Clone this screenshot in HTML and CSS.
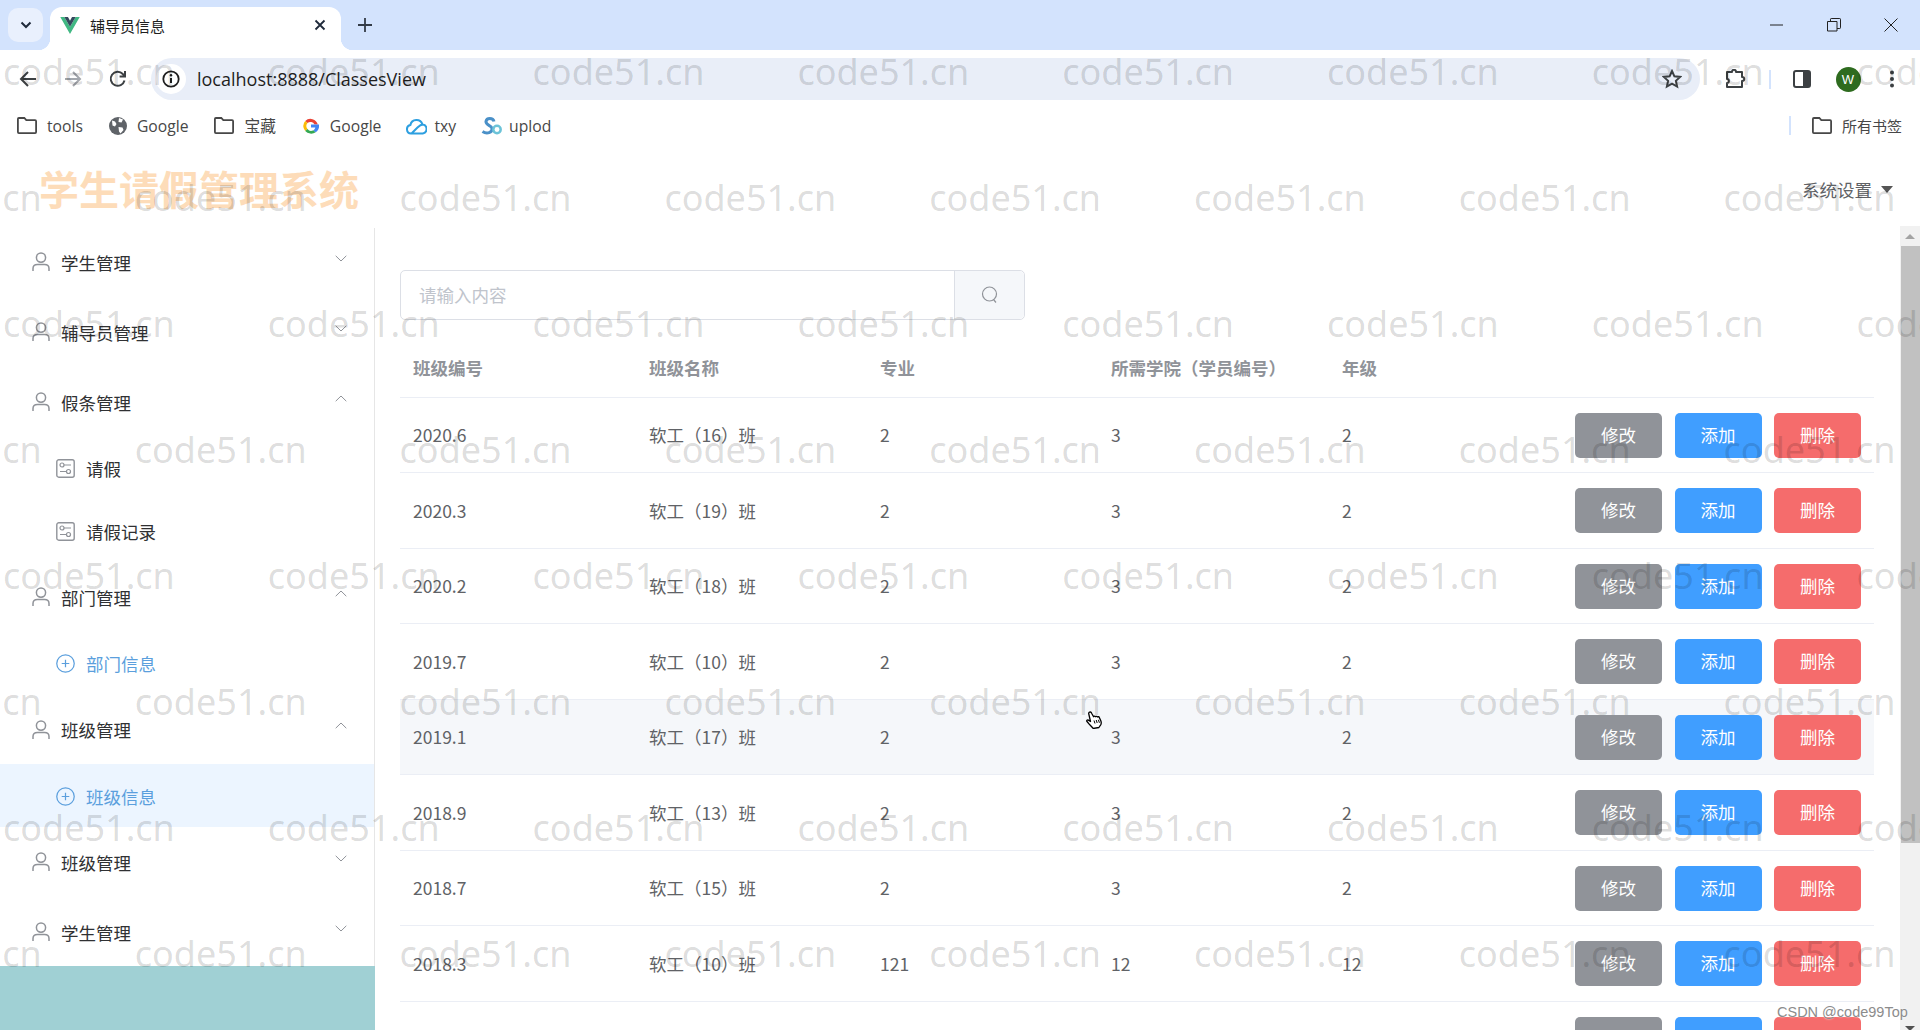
FILE: index.html
```html
<!DOCTYPE html>
<html lang="zh-CN">

<head>
    <meta charset="UTF-8">
    <meta name="viewport" content="width=device-width, initial-scale=1.0">
    <title>辅导员信息</title>
    <link rel="stylesheet" href="styles.css">
</head>

<body>
    <svg class="iconDefs" aria-hidden="true">
        <symbol id="i-user" viewBox="0 0 18 20">
            <circle cx="9" cy="5.6" r="4.6" fill="none" stroke="currentColor" stroke-width="1.5" />
            <path d="M1 19v-2.6c0-2.6 2-4 4.4-4h7.2c2.4 0 4.4 1.4 4.4 4V19" fill="none" stroke="currentColor" stroke-width="1.5" />
        </symbol>
        <symbol id="i-down" viewBox="0 0 12 7">
            <path d="M.7.8 6 6 11.3.8" fill="none" stroke="currentColor" stroke-width="1" />
        </symbol>
        <symbol id="i-up" viewBox="0 0 12 7">
            <path d="M.7 6.2 6 1l5.3 5.2" fill="none" stroke="currentColor" stroke-width="1" />
        </symbol>
        <symbol id="i-option" viewBox="0 0 19 19">
            <rect x=".8" y=".8" width="17.4" height="17.4" rx="2" fill="none" stroke="currentColor" stroke-width="1.4" />
            <circle cx="6" cy="6" r="2" fill="none" stroke="currentColor" stroke-width="1.2" />
            <circle cx="12.5" cy="12.5" r="2" fill="none" stroke="currentColor" stroke-width="1.2" />
            <path d="M8 6h7M4 12.5h6.5" fill="none" stroke="currentColor" stroke-width="1.2" />
        </symbol>
        <symbol id="i-plus" viewBox="0 0 20 20">
            <circle cx="10" cy="10" r="9.2" fill="none" stroke="currentColor" stroke-width="1.3" />
            <path d="M10 6v8M6 10h8" fill="none" stroke="currentColor" stroke-width="1.3" />
        </symbol>
        <symbol id="i-folder" viewBox="0 0 20 17">
            <path d="M1.9 1h5.4l2 2.2h8.8c.6 0 1 .4 1 1v10.9c0 .6-.4 1-1 1H1.9c-.6 0-1-.4-1-1V2c0-.6.4-1 1-1z" fill="none" stroke="currentColor" stroke-width="1.8" />
        </symbol>
    </svg>

    <div class="browserTabs">
        <div class="tabSearch">
            <svg class="glyph12" viewBox="0 0 12 8"><path d="M1.5 1.5 6 6l4.500-4.500" fill="none" stroke="#1f2a3a" stroke-width="2" /></svg>
        </div>
        <div class="tab">
            <svg class="vueLogo" viewBox="0 0 24 21">
                <path d="M0 0h5l7 12 7-12h5L12 21z" fill="#41b883" />
                <path d="M5 0h4.500L12 4.500 14.500 0H19l-7 12z" fill="#35495e" />
            </svg>
            <span class="tabTitle">辅导员信息</span>
            <svg class="tabClose" viewBox="0 0 12 12"><path d="M1.5 1.5l9 9M10.5 1.5l-9 9" fill="none" stroke="#1f2a3a" stroke-width="1.8" /></svg>
        </div>
        <div class="newTab">
            <svg class="glyph14" viewBox="0 0 14 14"><path d="M7 0v14M0 7h14" fill="none" stroke="#333b47" stroke-width="1.8" /></svg>
        </div>
        <div class="windowControls">
            <div class="windowBtn"><svg class="glyph14" viewBox="0 0 14 14"><path d="M0 7h13" fill="none" stroke="#222" stroke-width="1" /></svg></div>
            <div class="windowBtn"><svg class="glyph14" viewBox="0 0 14 14"><path d="M.5 3.5H10V13H.5zM3.500 3.500V1.200c0-.4.3-.7.7-.7h8.600c.4 0 .7.300.7.700v8.600c0 .4-.3.700-.7.700H10" fill="none" stroke="#222" stroke-width="1" /></svg></div>
            <div class="windowBtn"><svg class="glyph14" viewBox="0 0 14 14"><path d="M.5.5l13 13M13.5.5l-13 13" fill="none" stroke="#222" stroke-width="1" /></svg></div>
        </div>
    </div>

    <div class="toolbar">
        <div class="navBtn"><svg class="glyph18" viewBox="0 0 18 18"><path d="M17 9H2M9 2 2 9l7 7" fill="none" stroke="#3c4043" stroke-width="2" /></svg></div>
        <div class="navBtn"><svg class="glyph18" viewBox="0 0 18 18"><path d="M1 9h15M9 2l7 7-7 7" fill="none" stroke="#a3a7ad" stroke-width="2" /></svg></div>
        <div class="navBtn"><svg class="glyph18" viewBox="0 0 18 18"><path d="M15.5 10.5A7 7 0 1 1 13.8 4L16 6.200M16 1v5.400h-5.400" fill="none" stroke="#3c4043" stroke-width="2" /></svg></div>
        <div class="omnibox">
            <div class="siteInfo">
                <svg class="glyph18" viewBox="0 0 18 18">
                    <circle cx="9" cy="9" r="7.7" fill="none" stroke="#1f1f1f" stroke-width="1.8" />
                    <path d="M9 8v5" stroke="#1f1f1f" stroke-width="2" />
                    <circle cx="9" cy="5.3" r="1.2" fill="#1f1f1f" />
                </svg>
            </div>
            <span class="urlText">localhost:8888/ClassesView</span>
            <svg class="starIcon" viewBox="0 0 20 20"><path d="M10 2l2.4 5.300 5.800.6-4.300 3.900 1.200 5.700-5.100-2.900-5.100 2.900 1.200-5.700L1.800 7.900l5.800-.6z" fill="none" stroke="#3c4043" stroke-width="2" /></svg>
        </div>
        <div class="extBtn"><svg class="extIcon" viewBox="0 0 22 20"><path d="M2 3h5c0-3 4-3 4 0h6v5c3 0 3 4 0 4v6H2v-4c2.500 0 2.500-4 0-4z" fill="none" stroke="#3c4043" stroke-width="2" stroke-linejoin="round" /></svg></div>
        <div class="toolSep"></div>
        <div class="panelBtn"><svg class="panelIcon" viewBox="0 0 18 18"><rect x="1" y="1" width="16" height="16" rx="2" fill="#fff" stroke="#3c4043" stroke-width="2" /><rect x="10" y="1" width="7" height="16" fill="#3c4043" /></svg></div>
        <div class="avatarBtn"><span class="avatar">W</span></div>
        <div class="kebabBtn"><svg class="kebabIcon" viewBox="0 0 6 18"><circle cx="3" cy="2.5" r="2" fill="#3c4043" /><circle cx="3" cy="9" r="2" fill="#3c4043" /><circle cx="3" cy="15.5" r="2" fill="#3c4043" /></svg></div>
    </div>

    <div class="bookmarks">
        <div class="bookmark"><svg class="folderIcon"><use href="#i-folder" /></svg><span>tools</span></div>
        <div class="bookmark">
            <svg class="bmIcon" viewBox="0 0 18 18">
                <circle cx="9" cy="9" r="9" fill="#5f6368" />
                <path d="M3 3.500l3 1 1.500 2.500L6 9.500l-2.500-1zM10 1l4 1.500-1.500 3-3-.5zM9.500 10l4 .5 1 2.500-3 3.500-1.500-2z" fill="#fff" />
            </svg>
            <span>Google</span>
        </div>
        <div class="bookmark"><svg class="folderIcon"><use href="#i-folder" /></svg><span>宝藏</span></div>
        <div class="bookmark">
            <svg class="bmIcon" viewBox="0 0 18 18">
                <path d="M15.800 7.500A7.500 7.500 0 0 0 3.200 4.100l2.300 2a4.500 4.500 0 0 1 7 1.400z" fill="#ea4335" />
                <path d="M3.200 4.100A7.800 7.800 0 0 0 3.200 13.900l2.300-2a4.500 4.500 0 0 1 0-5.800z" fill="#fbbc05" />
                <path d="M3.200 13.900a7.800 7.800 0 0 0 10.500 1.300l-2.300-2a4.500 4.500 0 0 1-5.900-1.300z" fill="#34a853" />
                <path d="M9 7.500h8c.5 4-1 6.300-3.300 7.700l-2.300-2c1-.6 1.600-1.400 1.900-2.700H9z" fill="#4285f4" />
            </svg>
            <span>Google</span>
        </div>
        <div class="bookmark">
            <svg class="bmIcon cloudIcon" viewBox="0 0 21 18">
                <path d="M5 16.500a4.300 4.300 0 0 1-.6-8.500 6.200 6.200 0 0 1 12-.6 4.600 4.600 0 0 1 .4 9.100zM5.500 16.500l6-6c2-2 3.800-3 5.500-3" fill="none" stroke="#2d9fe0" stroke-width="2" />
            </svg>
            <span>txy</span>
        </div>
        <div class="bookmark">
            <svg class="bmIcon cloudIcon" viewBox="0 0 21 18">
                <path d="M13 4.500C12 .5 5.500.5 5 4.500 4.500 8.500 10.500 8 11 11.500 11.500 15.500 6 17.500 1.500 14.500" fill="none" stroke="#4a90c8" stroke-width="3" />
                <circle cx="16" cy="12.500" r="3.700" fill="none" stroke="#6cc3d8" stroke-width="2.500" />
            </svg>
            <span>uplod</span>
        </div>
        <div class="bookmarkSep"></div>
        <div class="bookmark allMarks"><svg class="folderIcon"><use href="#i-folder" /></svg><span>所有书签</span></div>
    </div>

    <div class="appHeader">
        <div class="logo">学生请假管理系统</div>
        <div class="settings">系统设置<i class="caret"></i></div>
    </div>

    <div class="appBody">
        <aside class="sidebar">
            <nav class="menu">
                <div class="menuItem"><svg class="userIcon"><use href="#i-user" /></svg>学生管理<svg class="arrowIcon"><use href="#i-down" /></svg></div>
                <div class="menuItem"><svg class="userIcon"><use href="#i-user" /></svg>辅导员管理<svg class="arrowIcon"><use href="#i-down" /></svg></div>
                <div class="menuItem"><svg class="userIcon"><use href="#i-user" /></svg>假条管理<svg class="arrowIcon"><use href="#i-up" /></svg></div>
                <div class="subItem"><svg class="subIcon"><use href="#i-option" /></svg>请假</div>
                <div class="subItem"><svg class="subIcon"><use href="#i-option" /></svg>请假记录</div>
                <div class="menuItem"><svg class="userIcon"><use href="#i-user" /></svg>部门管理<svg class="arrowIcon"><use href="#i-up" /></svg></div>
                <div class="subItem blue"><svg class="subIcon"><use href="#i-plus" /></svg>部门信息</div>
                <div class="menuItem"><svg class="userIcon"><use href="#i-user" /></svg>班级管理<svg class="arrowIcon"><use href="#i-up" /></svg></div>
                <div class="subItem blue active"><svg class="subIcon"><use href="#i-plus" /></svg>班级信息</div>
                <div class="menuItem"><svg class="userIcon"><use href="#i-user" /></svg>班级管理<svg class="arrowIcon"><use href="#i-down" /></svg></div>
                <div class="menuItem"><svg class="userIcon"><use href="#i-user" /></svg>学生管理<svg class="arrowIcon"><use href="#i-down" /></svg></div>
            </nav>
            <div class="sidebarFoot"></div>
        </aside>

        <main class="content">
            <div class="searchBox">
                <div class="searchInput">请输入内容</div>
                <div class="searchBtn">
                    <svg class="searchIcon" viewBox="0 0 18 18">
                        <circle cx="8.5" cy="8" r="7" fill="none" stroke="#909399" stroke-width="1.2" />
                        <path d="M12.5 13.5l2.5 3" fill="none" stroke="#909399" stroke-width="1.2" />
                    </svg>
                </div>
            </div>

            <table class="dataTable">
                <colgroup>
                    <col class="col1">
                    <col class="col2">
                    <col class="col2">
                    <col class="col2">
                    <col class="col2">
                    <col>
                </colgroup>
                <thead>
                    <tr>
                        <th>班级编号</th>
                        <th>班级名称</th>
                        <th>专业</th>
                        <th>所需学院（学员编号）</th>
                        <th>年级</th>
                        <th></th>
                    </tr>
                </thead>
                <tbody>
                    <tr>
                        <td>2020.6</td><td>软工（16）班</td><td>2</td><td>3</td><td>2</td>
                        <td class="actions"><button class="btn gray">修改</button><button class="btn blueBtn">添加</button><button class="btn red">删除</button></td>
                    </tr>
                    <tr>
                        <td>2020.3</td><td>软工（19）班</td><td>2</td><td>3</td><td>2</td>
                        <td class="actions"><button class="btn gray">修改</button><button class="btn blueBtn">添加</button><button class="btn red">删除</button></td>
                    </tr>
                    <tr>
                        <td>2020.2</td><td>软工（18）班</td><td>2</td><td>3</td><td>2</td>
                        <td class="actions"><button class="btn gray">修改</button><button class="btn blueBtn">添加</button><button class="btn red">删除</button></td>
                    </tr>
                    <tr>
                        <td>2019.7</td><td>软工（10）班</td><td>2</td><td>3</td><td>2</td>
                        <td class="actions"><button class="btn gray">修改</button><button class="btn blueBtn">添加</button><button class="btn red">删除</button></td>
                    </tr>
                    <tr class="hoverRow">
                        <td>2019.1</td><td>软工（17）班</td><td>2</td><td>3</td><td>2</td>
                        <td class="actions"><button class="btn gray">修改</button><button class="btn blueBtn">添加</button><button class="btn red">删除</button></td>
                    </tr>
                    <tr>
                        <td>2018.9</td><td>软工（13）班</td><td>2</td><td>3</td><td>2</td>
                        <td class="actions"><button class="btn gray">修改</button><button class="btn blueBtn">添加</button><button class="btn red">删除</button></td>
                    </tr>
                    <tr>
                        <td>2018.7</td><td>软工（15）班</td><td>2</td><td>3</td><td>2</td>
                        <td class="actions"><button class="btn gray">修改</button><button class="btn blueBtn">添加</button><button class="btn red">删除</button></td>
                    </tr>
                    <tr>
                        <td>2018.3</td><td>软工（10）班</td><td>121</td><td>12</td><td>12</td>
                        <td class="actions"><button class="btn gray">修改</button><button class="btn blueBtn">添加</button><button class="btn red">删除</button></td>
                    </tr>
                    <tr>
                        <td></td><td></td><td></td><td></td><td></td>
                        <td class="actions"><button class="btn gray">修改</button><button class="btn blueBtn">添加</button><button class="btn red">删除</button></td>
                    </tr>
                </tbody>
            </table>
        </main>

        <div class="scrollbar">
            <div class="scrollArrow"><i class="arrowUp"></i></div>
            <div class="scrollThumb"></div>
            <div class="scrollArrow scrollArrowEnd"><i class="arrowDown"></i></div>
        </div>
    </div>

    <!-- 水印 -->
    <div class="watermark">
        <div class="wmRow"><span>code51.cn</span><span>code51.cn</span><span>code51.cn</span><span>code51.cn</span><span>code51.cn</span><span>code51.cn</span><span>code51.cn</span><span>code51.cn</span></div>
        <div class="wmRow wmShift"><span>code51.cn</span><span>code51.cn</span><span>code51.cn</span><span>code51.cn</span><span>code51.cn</span><span>code51.cn</span><span>code51.cn</span><span>code51.cn</span></div>
        <div class="wmRow"><span>code51.cn</span><span>code51.cn</span><span>code51.cn</span><span>code51.cn</span><span>code51.cn</span><span>code51.cn</span><span>code51.cn</span><span>code51.cn</span></div>
        <div class="wmRow wmShift"><span>code51.cn</span><span>code51.cn</span><span>code51.cn</span><span>code51.cn</span><span>code51.cn</span><span>code51.cn</span><span>code51.cn</span><span>code51.cn</span></div>
        <div class="wmRow"><span>code51.cn</span><span>code51.cn</span><span>code51.cn</span><span>code51.cn</span><span>code51.cn</span><span>code51.cn</span><span>code51.cn</span><span>code51.cn</span></div>
        <div class="wmRow wmShift"><span>code51.cn</span><span>code51.cn</span><span>code51.cn</span><span>code51.cn</span><span>code51.cn</span><span>code51.cn</span><span>code51.cn</span><span>code51.cn</span></div>
        <div class="wmRow"><span>code51.cn</span><span>code51.cn</span><span>code51.cn</span><span>code51.cn</span><span>code51.cn</span><span>code51.cn</span><span>code51.cn</span><span>code51.cn</span></div>
        <div class="wmRow wmShift"><span>code51.cn</span><span>code51.cn</span><span>code51.cn</span><span>code51.cn</span><span>code51.cn</span><span>code51.cn</span><span>code51.cn</span><span>code51.cn</span></div>
    </div>

    <svg class="handCursor" viewBox="0 0 18 18">
        <path d="M3.5 1.2c1-.5 1.700.1 2.100 1l2 3.600c.3-.9 1.500-.9 2 0 .4-.7 1.500-.6 1.900.2.500-.5 1.400-.3 1.800.4l1.500 3.400c.8 2 .3 4-.9 5.200l-1 1.500-5.600 1-3.500-3.700L1 10.500c-.7-.8.300-2 1.300-1.400l2.200 1.400L2.800 3c-.3-.7 0-1.500.7-1.800z" fill="#fff" stroke="#000" stroke-width="1.3" stroke-linejoin="round" />
        <path d="M8 9.5l1 3M10.200 9l1 3M12.400 8.800l1 3" fill="none" stroke="#000" stroke-width="1" />
    </svg>

    <div class="csdnMark">CSDN @code99Top</div>
</body>

</html>
```

FILE: styles.css
```css
* {
    box-sizing: border-box;
}

html,
body {
    height: 100%;
}

body {
    position: relative;
    display: flex;
    flex-direction: column;
    height: 1030px;
    margin: 0;
    overflow: hidden;
    font-family: "Noto Sans CJK SC", "Liberation Sans", sans-serif;
    background-color: #fff;
    color: #303133;
}

svg {
    display: block;
    flex: none;
}

.iconDefs {
    position: absolute;
    width: 0;
    height: 0;
}

.glyph12 {
    width: 12px;
    height: 8px;
}

.glyph14 {
    width: 14px;
    height: 14px;
}

.glyph18 {
    width: 18px;
    height: 18px;
}

/* Barra de abas */
.browserTabs {
    display: flex;
    align-items: flex-end;
    flex: none;
    height: 50px;
    padding-left: 8px;
    padding-right: 1px;
    background-color: #d3e3fd;
}

.tabSearch {
    display: flex;
    align-items: center;
    justify-content: center;
    width: 35px;
    height: 34px;
    margin-bottom: 8px;
    border-radius: 10px;
    background-color: #e9f0fd;
}

.tab {
    position: relative;
    display: flex;
    align-items: center;
    width: 291px;
    height: 43px;
    margin-left: 7px;
    padding: 0 15px 7px 10px;
    border-radius: 12px 12px 0 0;
    background-color: #fff;
}

.tab::before,
.tab::after {
    content: "";
    position: absolute;
    bottom: 0;
    width: 12px;
    height: 12px;
}

.tab::before {
    left: -12px;
    background: radial-gradient(circle at 0 0, transparent 12px, #fff 12.5px);
}

.tab::after {
    right: -12px;
    background: radial-gradient(circle at 100% 0, transparent 12px, #fff 12.5px);
}

.vueLogo {
    width: 20px;
    height: 17px;
}

.tabTitle {
    margin-left: 10px;
    font-size: 15px;
    color: #1f1f1f;
}

.tabClose {
    width: 12px;
    height: 12px;
    margin-left: auto;
}

.newTab {
    display: flex;
    align-items: center;
    justify-content: center;
    width: 48px;
    height: 50px;
}

.windowControls {
    display: flex;
    margin-left: auto;
}

.windowBtn {
    display: flex;
    align-items: center;
    justify-content: center;
    width: 57px;
    height: 50px;
}

/* Barra de endereco */
.toolbar {
    display: flex;
    align-items: center;
    flex: none;
    height: 54px;
    padding-top: 4px;
    padding-left: 5px;
    border-radius: 12px 12px 0 0;
    background-color: #fff;
}

.navBtn {
    display: flex;
    align-items: center;
    justify-content: center;
    width: 45px;
}

.omnibox {
    display: flex;
    align-items: center;
    flex: none;
    width: 1549px;
    height: 42px;
    margin-left: 11px;
    padding-left: 5px;
    padding-right: 18px;
    border-radius: 21px;
    background-color: #e9eef8;
}

.siteInfo {
    display: flex;
    align-items: center;
    justify-content: center;
    width: 30px;
    height: 30px;
    border-radius: 50%;
    background-color: #fff;
}

.urlText {
    margin-left: 11px;
    font-family: "Open Sans", "Liberation Sans", sans-serif;
    font-size: 18px;
    color: #1f1f1f;
}

.starIcon {
    width: 20px;
    height: 20px;
    margin-left: auto;
}

.extBtn {
    display: flex;
    justify-content: center;
    width: 44px;
    margin-left: 14px;
}

.extIcon {
    width: 22px;
    height: 20px;
}

.toolSep {
    width: 2px;
    height: 19px;
    margin-left: 11px;
    background-color: #d3e3fd;
}

.panelBtn {
    display: flex;
    justify-content: center;
    width: 44px;
    margin-left: 9px;
}

.panelIcon {
    width: 18px;
    height: 18px;
}

.avatarBtn {
    display: flex;
    justify-content: center;
    width: 48px;
}

.avatar {
    display: flex;
    align-items: center;
    justify-content: center;
    width: 25px;
    height: 25px;
    border-radius: 50%;
    font-family: "Liberation Sans", sans-serif;
    font-size: 13px;
    color: #fff;
    background-color: #2e6b1f;
}

.kebabBtn {
    display: flex;
    justify-content: center;
    width: 40px;
}

.kebabIcon {
    width: 6px;
    height: 18px;
}

/* Favoritos */
.bookmarks {
    display: flex;
    align-items: center;
    flex: none;
    height: 43px;
    padding-left: 17px;
    padding-right: 18px;
    gap: 26px;
    background-color: #fff;
}

.bookmark {
    display: flex;
    align-items: center;
    gap: 10px;
    font-family: "Open Sans", "Liberation Sans", "Noto Sans CJK SC", sans-serif;
    font-size: 15.7px;
    color: #474747;
}

.folderIcon {
    width: 20px;
    height: 17px;
    color: #474747;
}

.bmIcon {
    width: 18px;
    height: 18px;
}

.cloudIcon {
    width: 21px;
    height: 18px;
    margin-left: -1px;
    margin-right: -3px;
}

.bookmarkSep {
    width: 2px;
    height: 19px;
    margin-left: auto;
    background-color: #d3e3fd;
}

.allMarks {
    margin-left: -5px;
    font-size: 15px;
}

/* Cabecalho do sistema */
.appHeader {
    display: flex;
    align-items: center;
    justify-content: space-between;
    flex: none;
    height: 81px;
    padding-left: 39px;
    padding-right: 27px;
}

.logo {
    font-size: 40px;
    line-height: 46px;
    font-weight: 700;
    color: #fddcb9;
}

.settings {
    display: flex;
    align-items: center;
    padding-top: 4px;
    font-size: 17.5px;
    color: #606266;
}

.caret {
    width: 0;
    height: 0;
    margin-left: 9px;
    border-left: 6px solid transparent;
    border-right: 6px solid transparent;
    border-top: 7px solid #555;
}

.appBody {
    display: flex;
    flex: 1;
    min-height: 0;
}

/* Menu lateral */
.sidebar {
    display: flex;
    flex-direction: column;
    flex: none;
    width: 375px;
}

.menu {
    flex: none;
    height: 738px;
    overflow: hidden;
    border-right: 1px solid #e6e6e6;
}

.menuItem {
    display: flex;
    align-items: center;
    height: 70px;
    padding-left: 32px;
    padding-right: 27px;
    padding-bottom: 2px;
    font-size: 17.5px;
}

.userIcon {
    width: 18px;
    height: 20px;
    margin-right: 11px;
    color: #909399;
}

.arrowIcon {
    width: 12px;
    height: 7px;
    margin-left: auto;
    margin-bottom: 8px;
    color: #909399;
}

.subItem {
    display: flex;
    align-items: center;
    height: 62.5px;
    padding-left: 56px;
    padding-bottom: 1px;
    font-size: 17.5px;
}

.subIcon {
    width: 19px;
    height: 19px;
    margin-right: 11px;
    color: #909399;
}

.blue {
    color: #5b9fdd;
}

.blue .subIcon {
    color: #5b9fdd;
}

.active {
    margin-top: -1.5px;
    margin-bottom: 1.5px;
    padding-top: 3px;
    background-color: #ecf5ff;
}

.sidebarFoot {
    flex: 1;
    background-color: #a0d0d4;
}

/* Conteudo */
.content {
    flex: 1;
    min-width: 0;
    padding: 42px 26px 0 25px;
    overflow: hidden;
}

.searchBox {
    display: flex;
    width: 625px;
    height: 50px;
    margin-bottom: 20px;
    border: 1px solid #dcdfe6;
    border-radius: 5px;
}

.searchInput {
    display: flex;
    align-items: center;
    flex: 1;
    padding-left: 18px;
    padding-bottom: 2px;
    font-size: 17.5px;
    color: #c0c4cc;
}

.searchBtn {
    display: flex;
    align-items: center;
    justify-content: center;
    width: 70px;
    border-left: 1px solid #dcdfe6;
    border-radius: 0 5px 5px 0;
    background-color: #f5f7fa;
}

.searchIcon {
    width: 18px;
    height: 18px;
}

.dataTable {
    width: 100%;
    table-layout: fixed;
    border-collapse: separate;
    border-spacing: 0;
    font-size: 17.5px;
    color: #606266;
}

.col1 {
    width: 236px;
}

.col2 {
    width: 231px;
}

.dataTable th {
    height: 57.5px;
    padding: 0 12px 2px 13px;
    text-align: left;
    font-weight: 700;
    color: #909399;
    border-bottom: 1px solid #ebeef5;
}

.dataTable td {
    height: 75.5px;
    padding: 0 12px 0 13px;
    border-bottom: 1px solid #ebeef5;
}

.hoverRow td {
    background-color: #f5f7fa;
}

.dataTable .actions {
    padding: 15px 13px 0 0;
    vertical-align: top;
    text-align: right;
    white-space: nowrap;
}

.btn {
    width: 87px;
    height: 45px;
    margin-left: 12.5px;
    padding: 0 0 2px;
    border: none;
    border-radius: 5px;
    font-family: inherit;
    font-size: 17.5px;
    color: #fff;
    vertical-align: top;
}

.gray {
    background-color: #909399;
}

.blueBtn {
    background-color: #409eff;
}

.red {
    background-color: #f56c6c;
}

/* Barra de rolagem */
.scrollbar {
    display: flex;
    flex-direction: column;
    flex: none;
    width: 20px;
    margin-top: -2px;
    background-color: #f1f1f1;
}

.scrollArrow {
    display: flex;
    align-items: center;
    justify-content: center;
    flex: none;
    height: 20px;
}

.scrollArrowEnd {
    margin-top: auto;
    margin-bottom: -8px;
}

.arrowUp,
.arrowDown {
    width: 0;
    height: 0;
    border-left: 5px solid transparent;
    border-right: 5px solid transparent;
}

.arrowUp {
    border-bottom: 5px solid #a3a3a3;
}

.arrowDown {
    border-top: 5px solid #505050;
}

.scrollThumb {
    flex: none;
    height: 597px;
    margin-left: 1px;
    background-color: #c1c1c1;
}

/* Sobreposicoes */
.watermark {
    position: absolute;
    top: 9px;
    left: 0;
    right: 0;
    bottom: 0;
    overflow: hidden;
    pointer-events: none;
}

.wmRow {
    display: flex;
    height: 126px;
    margin-left: 3px;
    line-height: 126px;
    font-family: "Noto Sans", sans-serif;
    font-size: 36px;
    color: rgba(0, 0, 0, 0.15);
}

.wmShift {
    margin-left: -130px;
}

.wmRow span {
    flex: none;
    width: 264.8px;
}

.handCursor {
    position: absolute;
    left: 1086px;
    top: 711px;
    width: 18px;
    height: 18px;
}

.csdnMark {
    position: absolute;
    top: 1004px;
    left: 1777px;
    font-family: "Liberation Sans", sans-serif;
    font-size: 14.5px;
    color: #8c8c8c;
    text-shadow: 0 0 2px #fff;
}
```
